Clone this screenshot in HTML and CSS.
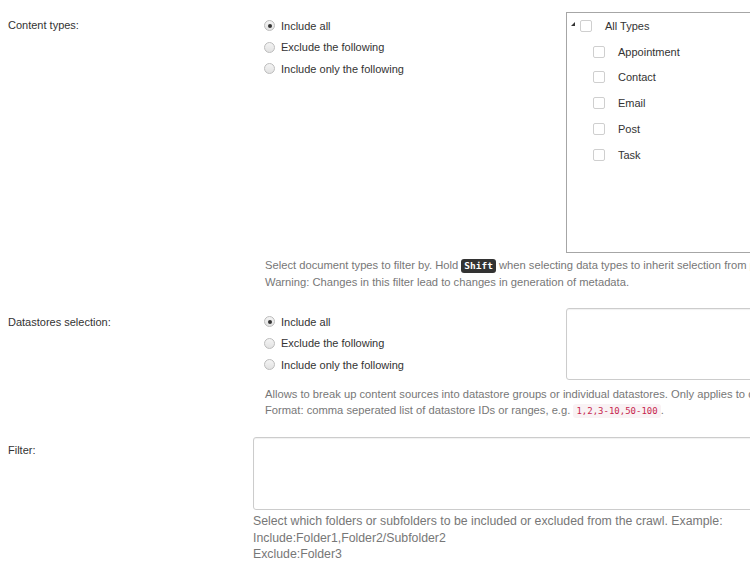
FILE: index.html
```
<!DOCTYPE html>
<html>
<head>
<meta charset="utf-8">
<link rel="stylesheet" href="styles.css">
</head>
<body>
<div class="page">
  <div class="row row-content">
    <div class="label">Content types:</div>
    <div class="control">
      <div class="split split-tree">
        <div class="radios">
          <div class="radio"><span class="dot checked"></span>Include all</div>
          <div class="radio"><span class="dot"></span>Exclude the following</div>
          <div class="radio"><span class="dot"></span>Include only the following</div>
        </div>
        <div class="tree">
          <div class="tree-item root"><span class="caret"></span><span class="cb"></span>All Types</div>
          <div class="tree-item child"><span class="cb"></span>Appointment</div>
          <div class="tree-item child"><span class="cb"></span>Contact</div>
          <div class="tree-item child"><span class="cb"></span>Email</div>
          <div class="tree-item child"><span class="cb"></span>Post</div>
          <div class="tree-item child"><span class="cb"></span>Task</div>
        </div>
      </div>
      <div class="help help-tree">Select document types to filter by. Hold <kbd class="kbd">Shift</kbd> when selecting data types to inherit selection from parent types.<br>Warning: Changes in this filter lead to changes in generation of metadata.</div>
    </div>
  </div>

  <div class="row row-ds">
    <div class="label">Datastores selection:</div>
    <div class="control">
      <div class="split split-ds">
        <div class="radios">
          <div class="radio"><span class="dot checked"></span>Include all</div>
          <div class="radio"><span class="dot"></span>Exclude the following</div>
          <div class="radio"><span class="dot"></span>Include only the following</div>
        </div>
        <div class="textarea ta-ds"></div>
      </div>
      <div class="help help-ds">Allows to break up content sources into datastore groups or individual datastores. Only applies to datastore enabled sources.<br>Format: comma seperated list of datastore IDs or ranges, e.g. <code class="code">1,2,3-10,50-100</code>.</div>
    </div>
  </div>

  <div class="row row-filter">
    <div class="label">Filter:</div>
    <div class="control control-flush">
      <div class="textarea ta-filter"></div>
      <div class="help help-filter">Select which folders or subfolders to be included or excluded from the crawl. Example:<br>Include:Folder1,Folder2/Subfolder2<br>Exclude:Folder3</div>
    </div>
  </div>
</div>
</body>
</html>
```

FILE: styles.css
```
html, body {
  margin: 0;
  padding: 0;
  background: #ffffff;
  overflow: hidden;
}

body {
  font-family: "Liberation Sans", Arial, sans-serif;
  font-size: 11px;
  color: #333333;
}

.page {
  width: 1100px;
  padding-left: 8px;
}

.row {
  display: grid;
  grid-template-columns: 245px 1fr;
}

.row-content { padding-top: 12px; }
.row-ds { padding-top: 19px; }
.row-filter { padding-top: 18px; }

.label {
  line-height: 16px;
  padding-top: 5px;
}

.control {
  padding-left: 11px;
}

.control-flush {
  padding-left: 0;
}

.split {
  display: grid;
  grid-template-columns: 302px 260px;
  align-items: start;
}

.radios {
  padding-top: 2.75px;
  display: flex;
  flex-direction: column;
}

.split-ds .radios {
  padding-top: 1.75px;
}

.radio {
  height: 21.5px;
  display: flex;
  align-items: center;
  line-height: 16px;
}

.dot {
  box-sizing: border-box;
  width: 11px;
  height: 11px;
  border-radius: 50%;
  border: 1px solid #bcbcbc;
  background: linear-gradient(#f4f4f4, #e2e2e2);
  margin-right: 6px;
  display: flex;
  align-items: center;
  justify-content: center;
}

.dot.checked::after {
  content: "";
  width: 4px;
  height: 4px;
  border-radius: 50%;
  background: #333333;
}

.tree {
  box-sizing: border-box;
  height: 241px;
  border: 1px solid #a6a6a6;
  padding-top: 0;
  padding-left: 4px;
}

.tree-item {
  height: 25.8px;
  display: flex;
  align-items: center;
  line-height: 16px;
}

.caret {
  width: 0;
  height: 0;
  border-left: 4px solid transparent;
  border-bottom: 4px solid #333333;
  margin-right: 5px;
  margin-top: -3px;
}

.cb {
  box-sizing: border-box;
  width: 12px;
  height: 12px;
  border: 1px solid #cfcfcf;
  border-radius: 2px;
  background: #ffffff;
  margin-right: 13px;
}

.tree-item.child {
  padding-left: 22px;
}

.help {
  color: #777777;
  line-height: 16px;
  white-space: nowrap;
  font-size: 11.2px;
}

.help-tree { margin-top: 4px; padding-left: 1px; }
.help-ds { margin-top: 6px; padding-left: 1px; }
.help-filter { margin-top: 3px; line-height: 16.5px; font-size: 12.3px; }

.kbd {
  font-family: "DejaVu Sans Mono", "Liberation Mono", monospace;
  font-size: 9.5px;
  font-weight: bold;
  color: #ffffff;
  background: #333333;
  border-radius: 3px;
  padding: 1px 3px 2px;
}

.code {
  font-family: "DejaVu Sans Mono", "Liberation Mono", monospace;
  font-size: 9px;
  color: #c7254e;
  background: #f9f2f4;
  border-radius: 3px;
  padding: 2px 3px;
}

.textarea {
  box-sizing: border-box;
  border: 1px solid #cccccc;
  border-radius: 3px;
  background: #ffffff;
  box-shadow: inset 0 1px 1px rgba(0, 0, 0, 0.06);
}

.ta-ds {
  height: 72px;
  margin-top: -1px;
}

.ta-filter {
  width: 760px;
  height: 73px;
}
```
